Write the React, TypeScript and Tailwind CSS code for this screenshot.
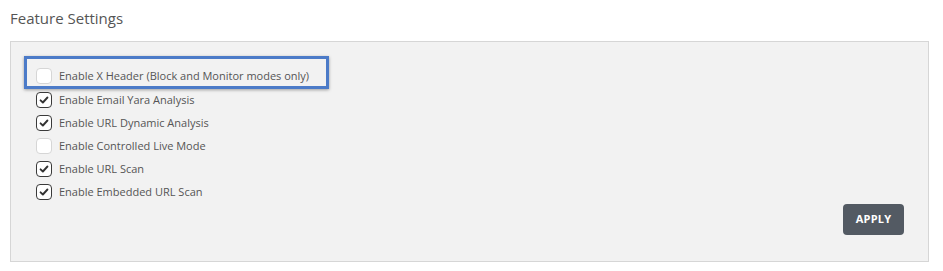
import React from 'react';

const features = [
  { label: 'Enable X Header (Block and Monitor modes only)', checked: false, highlight: true },
  { label: 'Enable Email Yara Analysis', checked: true },
  { label: 'Enable URL Dynamic Analysis', checked: true },
  { label: 'Enable Controlled Live Mode', checked: false },
  { label: 'Enable URL Scan', checked: true },
  { label: 'Enable Embedded URL Scan', checked: true },
];

const Checkbox = ({ checked }: { checked: boolean }) => (
  <span
    className={`flex items-center justify-center w-[16px] h-[16px] rounded-[4px] bg-white border ${
      checked ? 'border-[#3a3a3a]' : 'border-[#d6d6d6]'
    }`}
  >
    {checked && (
      <svg viewBox="0 0 16 16" className="w-[10px] h-[10px]">
        <path d="M2.5 8.5 L6.2 12 L13.5 4" fill="none" stroke="#333" strokeWidth="3" strokeLinecap="round" strokeLinejoin="round" />
      </svg>
    )}
  </span>
);

export default function App() {
  return (
    <div className="w-[943px] h-[271px] bg-white pl-[10px] pr-[14px] text-[#555]" style={{ fontFamily: '"Open Sans", "Liberation Sans", sans-serif' }}>
      <h2 className="pt-[8px] h-[41px] text-[15px] leading-[20px] text-[#555] font-normal">Feature Settings</h2>
      <div className="border border-[#d6d6d6] bg-[#f2f2f2] h-[221px] pl-[25px] pr-[24px] pt-[22px]">
        <ul className="flex flex-col">
          {features.map((f, i) => (
            <li key={f.label} className={`relative flex items-center gap-[7px] h-[23px] ${i === 0 ? 'mb-[1px]' : ''}`}>
              {f.highlight && (
                <span className="absolute left-[-12px] top-[-8px] w-[305px] h-[33px] border-[3px] border-[#4c7bc8] shadow-[0_1px_3px_rgba(0,0,0,0.35)] pointer-events-none" />
              )}
              <Checkbox checked={f.checked} />
              <span className="text-[11px] leading-none text-[#555]">{f.label}</span>
            </li>
          ))}
        </ul>
        <div className="flex justify-end mt-[1px]">
          <button className="w-[61px] h-[31px] rounded-[4px] bg-[#535a63] text-white text-[11px] font-bold tracking-[0.2px]">
            APPLY
          </button>
        </div>
      </div>
    </div>
  );
}
